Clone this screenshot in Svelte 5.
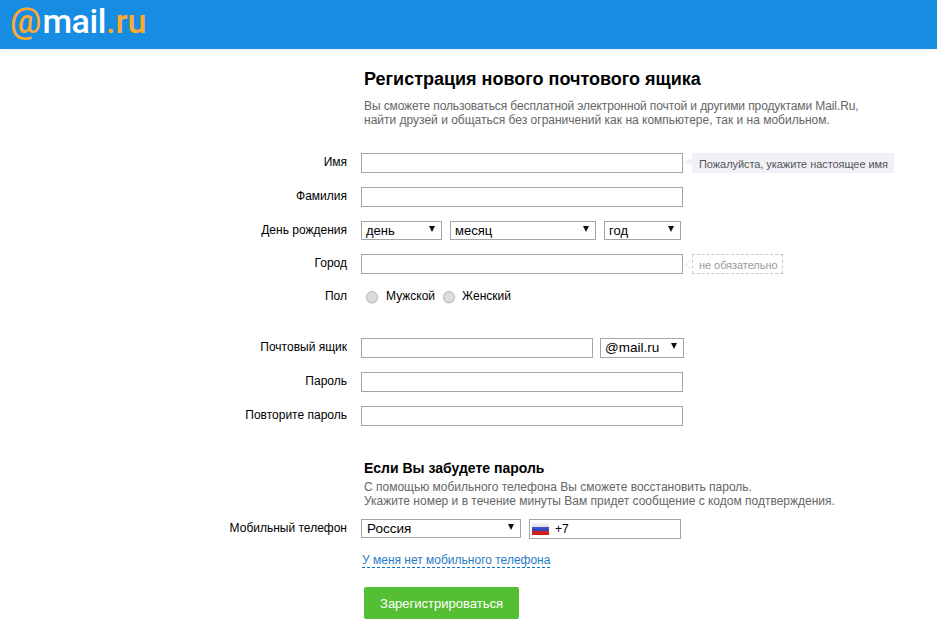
<script>
  const dayRow = [
    { label: 'день', cls: 'day' },
    { label: 'месяц', cls: 'month' },
    { label: 'год', cls: 'year' }
  ];
</script>

<header class="topbar">
  <div class="logo"><span class="at">@</span><span class="mail">mail</span><span class="ru">.ru</span></div>
</header>

<main class="form">
  <div class="intro">
    <h1>Регистрация нового почтового ящика</h1>
    <p><span class="tight">Вы сможете пользоваться бесплатной электронной почтой и другими продуктами Mail.Ru,</span><br />найти друзей и общаться без ограничений как на компьютере, так и на мобильном.</p>
  </div>

  <div class="row first">
    <span class="label">Имя</span>
    <div class="input wide"></div>
    <div class="hint">Пожалуйста, укажите настоящее имя</div>
  </div>
  <div class="row">
    <span class="label">Фамилия</span>
    <div class="input wide"></div>
  </div>
  <div class="row">
    <span class="label">День рождения</span>
    <div class="dates">
      {#each dayRow as d}
        <div class="select {d.cls}">{d.label}<i class="caret"></i></div>
      {/each}
    </div>
  </div>
  <div class="row">
    <span class="label">Город</span>
    <div class="input wide"></div>
    <div class="optional">не обязательно</div>
  </div>
  <div class="row gender">
    <span class="label">Пол</span>
    <span class="radio"></span><span class="radio-text male">Мужской</span>
    <span class="radio"></span><span class="radio-text">Женский</span>
  </div>

  <div class="row mailbox">
    <span class="label">Почтовый ящик</span>
    <div class="input box"></div>
    <div class="select domain">@mail.ru<i class="caret"></i></div>
  </div>
  <div class="row">
    <span class="label">Пароль</span>
    <div class="input wide"></div>
  </div>
  <div class="row">
    <span class="label">Повторите пароль</span>
    <div class="input wide"></div>
  </div>

  <div class="recover">
    <h2>Если Вы забудете пароль</h2>
    <p>С помощью мобильного телефона Вы сможете восстановить пароль.<br />Укажите номер и в течение минуты Вам придет сообщение с кодом подтверждения.</p>
  </div>

  <div class="row phone">
    <span class="label">Мобильный телефон</span>
    <div class="select country">Россия<i class="caret"></i></div>
    <div class="input tel">
      <svg class="flag" width="17" height="12" viewBox="0 0 17 12">
        <defs>
          <linearGradient id="flagShade" x1="0" y1="0" x2="0" y2="1">
            <stop offset="0" stop-color="#fff" stop-opacity="0.25" />
            <stop offset="1" stop-color="#000" stop-opacity="0.1" />
          </linearGradient>
        </defs>
        <rect width="17" height="4" fill="#eef0f6" />
        <rect y="4" width="17" height="4" fill="#2b3fd0" />
        <rect y="8" width="17" height="4" fill="#e3201b" />
        <rect width="17" height="12" fill="url(#flagShade)" />
      </svg>
      <span>+7</span>
    </div>
  </div>

  <a class="nophone" href="#top">У меня нет мобильного телефона</a>
  <button class="submit">Зарегистрироваться</button>
</main>

<style>
  :global(body) {
    margin: 0;
    background: #fff;
    font-family: "Liberation Sans", Arial, sans-serif;
    font-size: 12px;
    color: #000;
  }

  .topbar {
    height: 49px;
    background: #168de2;
    box-shadow: 0 1px 3px rgba(0, 0, 0, 0.08);
    padding-left: 10px;
  }

  .logo {
    display: flex;
    align-items: baseline;
    height: 49px;
    font-family: Roboto, sans-serif;
    font-weight: 500;
    line-height: 42px;
    color: #fff;
  }

  .at {
    font-size: 35px;
    color: #ffa930;
    font-weight: 500;
  }

  .mail {
    font-size: 34px;
    letter-spacing: -0.4px;
    margin-left: 1px;
  }

  .ru {
    font-size: 34px;
    color: #ffa930;
    font-weight: 500;
  }

  .form {
    padding-left: 361px;
    position: relative;
  }

  .intro {
    padding: 20px 0 0 3px;
  }

  h1 {
    margin: 0;
    font-size: 18px;
    line-height: 20px;
    font-weight: 700;
  }

  .intro p {
    margin: 10px 0 0;
    font-size: 12px;
    line-height: 14px;
    color: #666;
  }

  .tight {
    letter-spacing: -0.105px;
  }

  .row {
    display: flex;
    align-items: flex-start;
    position: relative;
    margin-top: 14px;
  }

  .row.first {
    margin-top: 26px;
  }

  .label {
    position: absolute;
    right: 100%;
    top: 2px;
    width: 200px;
    margin-right: 14px;
    text-align: right;
    line-height: 14px;
    white-space: nowrap;
  }

  .input {
    height: 18px;
    border: 1px solid #a5a5a5;
    background: #fff;
    box-sizing: content-box;
  }

  .wide {
    width: 320px;
  }

  .box {
    width: 230px;
  }

  .hint {
    position: relative;
    margin-left: 9px;
    height: 20px;
    padding: 0 6px 0 7px;
    background: #f0f1f6;
    color: #555;
    font-size: 11px;
    letter-spacing: -0.06px;
    line-height: 22px;
    white-space: nowrap;
  }

  .hint::before {
    content: "";
    position: absolute;
    left: -8px;
    top: 5px;
    border-top: 4px solid transparent;
    border-bottom: 4px solid transparent;
    border-right: 8px solid #f0f1f6;
  }

  .optional {
    position: relative;
    margin-left: 9px;
    height: 18px;
    padding: 0 5px 0 6px;
    border: 1px dashed #c8c8c8;
    color: #999;
    font-size: 11px;
    letter-spacing: -0.06px;
    line-height: 21px;
    white-space: nowrap;
  }

  .optional::before {
    content: "";
    position: absolute;
    left: -7px;
    top: 6px;
    width: 6px;
    height: 6px;
    border-left: 1px dashed #c8c8c8;
    border-bottom: 1px dashed #c8c8c8;
    background: #fff;
    transform: rotate(45deg) scale(0.8);
  }

  .dates {
    display: flex;
    gap: 8px;
  }

  .select {
    position: relative;
    height: 17px;
    border: 1px solid #a5a5a5;
    padding-left: 4px;
    font-size: 13px;
    line-height: 17px;
    white-space: nowrap;
  }

  .caret {
    position: absolute;
    right: 6px;
    top: 4px;
    border-top: 6px solid #111;
    border-left: 3.5px solid transparent;
    border-right: 3.5px solid transparent;
  }

  .day {
    width: 75px;
  }

  .month {
    width: 140px;
  }

  .year {
    width: 71px;
  }

  .gender {
    height: 20px;
    margin-top: 12px;
    align-items: center;
    font-size: 12px;
  }

  .gender .label {
    top: 3px;
  }

  .radio {
    width: 10px;
    height: 10px;
    margin: 2px 8px 0 5px;
    border: 1px solid #b8b8b8;
    border-radius: 50%;
    background: #dcdcdc;
    box-shadow: 0 1px 1px rgba(0, 0, 0, 0.1);
  }

  .radio-text {
    line-height: 14px;
  }

  .male {
    margin-right: 3px;
  }

  .male + .radio {
    margin-right: 7px;
  }

  .mailbox {
    margin-top: 32px;
  }

  .domain {
    width: 78px;
    margin-left: 7px;
    height: 18px;
    font-size: 13.5px;
    line-height: 18px;
  }

  .recover {
    padding: 34px 0 0 3px;
  }

  h2 {
    margin: 0;
    font-size: 14px;
    line-height: 17px;
  }

  .recover p {
    margin: 3px 0 0;
    line-height: 14px;
    color: #666;
  }

  .phone {
    margin-top: 11px;
  }

  .country {
    height: 17px;
    padding-left: 5px;
    width: 153px;
    font-size: 13.5px;
  }

  .tel {
    display: flex;
    align-items: center;
    margin-left: 8px;
    width: 150px;
  }

  .flag {
    margin: 0 6px 0 2px;
  }

  .tel span {
    font-size: 12px;
  }

  .nophone {
    display: block;
    width: fit-content;
    margin: 14px 0 0 1px;
    color: #2a7cc7;
    text-decoration: none;
    line-height: 14px;
    border-bottom: 1px dashed #0d74c6;
  }

  .submit {
    display: block;
    width: 155px;
    height: 32px;
    margin: 19px 0 0 3px;
    border: 0;
    border-radius: 2px;
    background: #55bf33;
    color: #fff;
    font: 13px "Liberation Sans", Arial, sans-serif;
  }
</style>
